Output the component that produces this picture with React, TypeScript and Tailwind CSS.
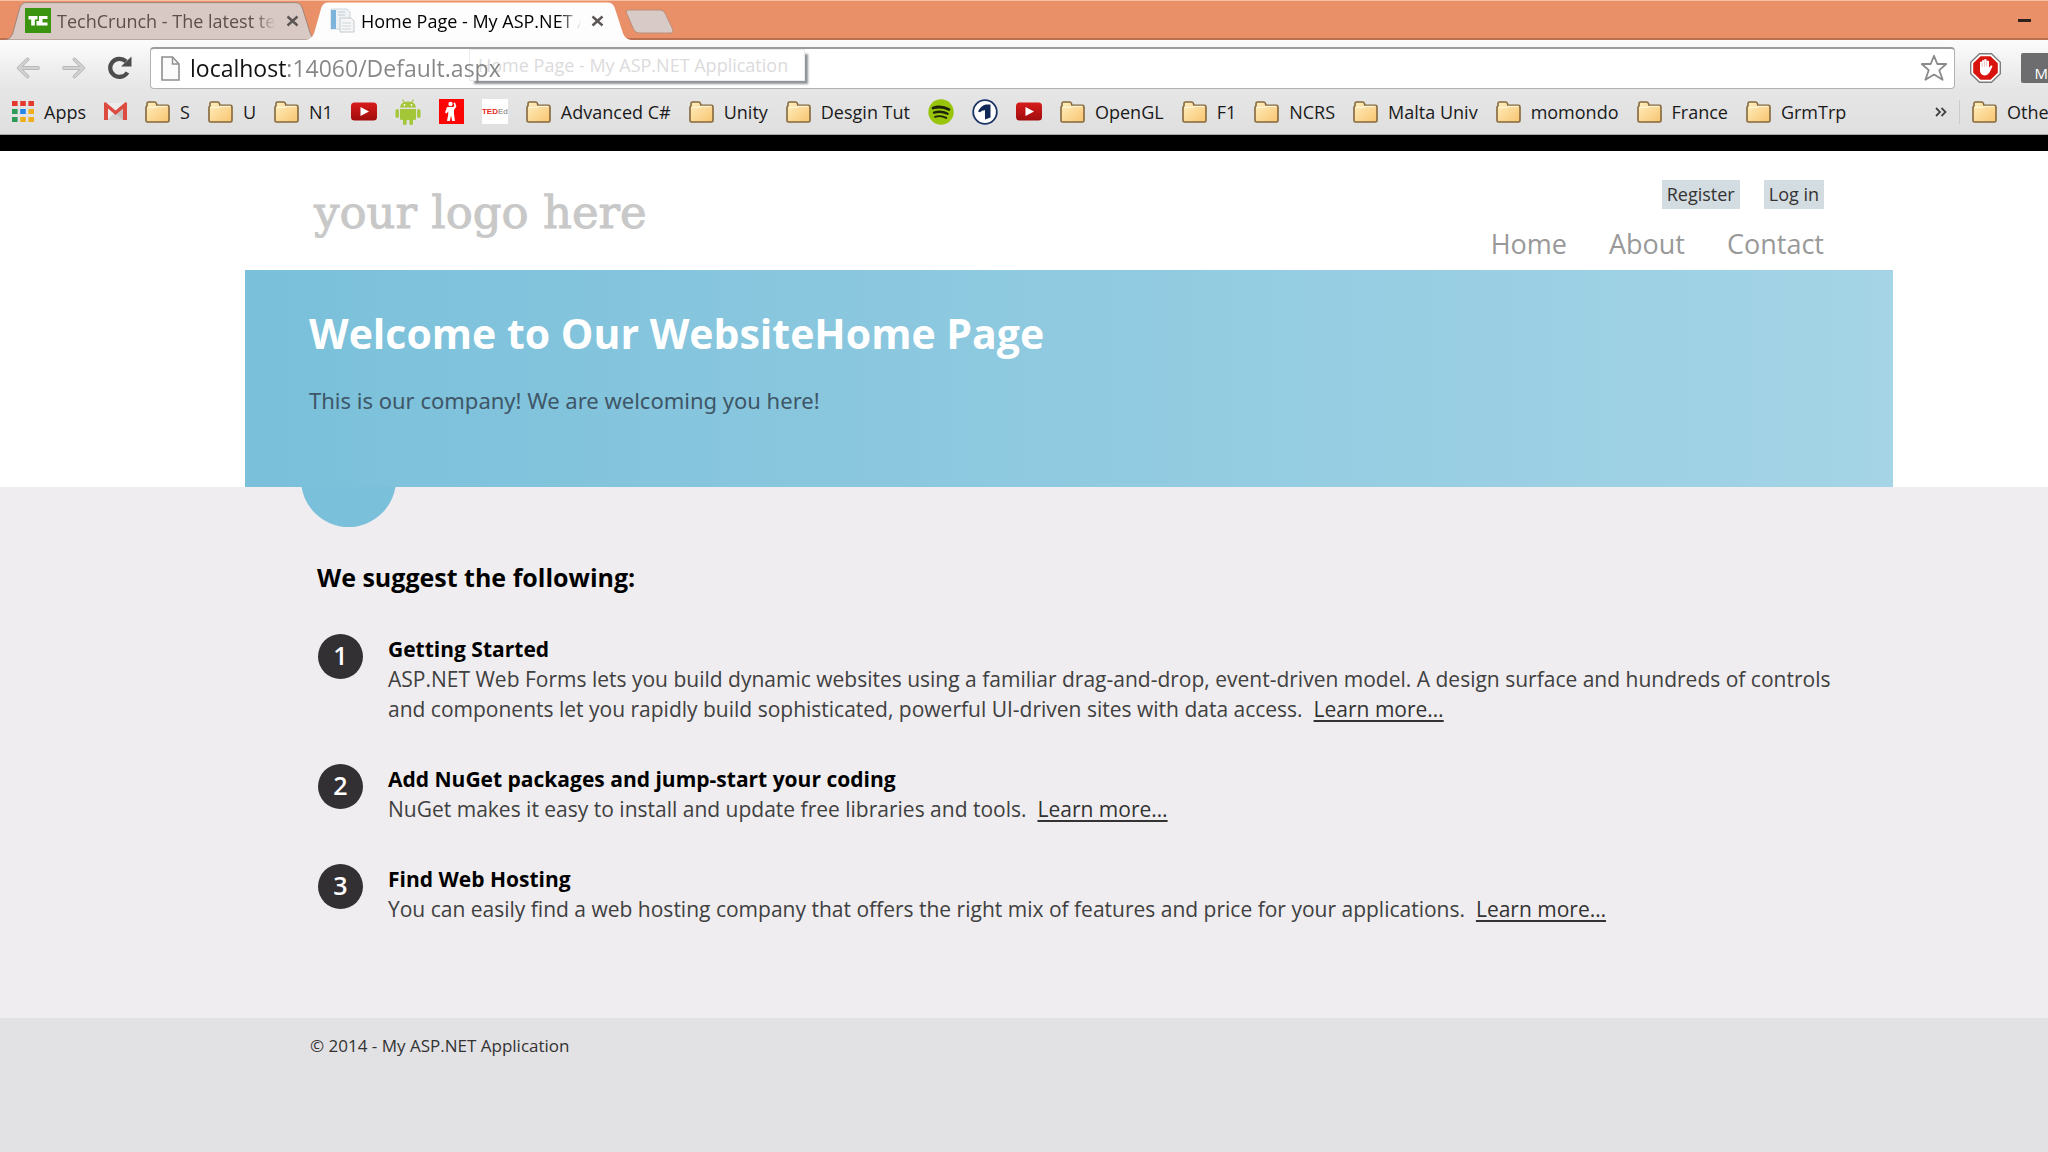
import type { ReactNode } from "react";

/* ---------- icons ---------- */

function FolderIcon() {
  return (
    <svg viewBox="0 0 25 22" className="h-[22px] w-[25px] shrink-0" aria-hidden="true">
      <defs>
        <linearGradient id="folder" x1="0" y1="0" x2="1" y2="1">
          <stop offset="0" stopColor="#fff0c0" />
          <stop offset="1" stopColor="#f8c470" />
        </linearGradient>
      </defs>
      <path d="M2 5V2.6Q2 1 3.6 1H9.4Q11 1 11.4 2.4L12 4.4H22.4Q24 4.4 24 6V19.4Q24 21 22.4 21H2.6Q1 21 1 19.4V6Z" fill="url(#folder)" stroke="#84673a" strokeWidth="1.6" />
      <path d="M2.5 6.4H10.6L12 5.4H22.6" fill="none" stroke="#fff6d8" strokeWidth="1.2" />
    </svg>
  );
}

function AppsIcon() {
  const colors = ["#e5392f", "#e5392f", "#e5392f", "#2e9a57", "#2387ea", "#efae1c", "#2e9a57", "#efae1c", "#efae1c"];
  return (
    <svg viewBox="0 0 22 21" className="h-[21px] w-[22px] shrink-0" aria-hidden="true">
      {colors.map((c, i) => (
        <rect key={i} x={(i % 3) * 8.2} y={Math.floor(i / 3) * 8} width="5.6" height="5" fill={c} />
      ))}
    </svg>
  );
}

function GmailIcon() {
  return (
    <svg viewBox="0 0 23 19" className="h-[19px] w-[23px] shrink-0" aria-hidden="true">
      <path d="M2 1H21V18H2Z" fill="#ececec" />
      <path d="M3 18L11.5 10L20 18Z" fill="#d2d2d2" />
      <path d="M12 11L21 3V18H19Z" fill="#c4c0c0" />
      <path d="M0 1.5Q0 0 2 0.4L11.5 8.6L21 0.4Q23 0 23 1.5V18H19V6.4L11.5 13L4 6.4V18H0Z" fill="#dc4a40" />
    </svg>
  );
}

function YouTubeIcon() {
  return (
    <svg viewBox="0 0 26 19" className="h-[19px] w-[26px] shrink-0" aria-hidden="true">
      <defs>
        <linearGradient id="yt" x1="0" y1="0" x2="0" y2="1">
          <stop offset="0" stopColor="#d81c1c" />
          <stop offset="1" stopColor="#a00c0c" />
        </linearGradient>
      </defs>
      <rect x="0" y="0.5" width="26" height="18" rx="3.5" fill="url(#yt)" />
      <path d="M9.5 5L18 9.5L9.5 14Z" fill="#fff" />
    </svg>
  );
}

function AndroidIcon() {
  return (
    <svg viewBox="0 0 26 26" className="h-[26px] w-[26px] shrink-0" aria-hidden="true">
      <g fill="#a4c639">
        <path d="M5 8.6Q5.600 2.800 13 2.600Q20.400 2.800 21 8.600Z" />
        <path d="M5 10H21V19.500Q21 21 19.500 21H6.500Q5 21 5 19.500Z" />
        <rect x="0.500" y="10" width="3.400" height="9" rx="1.700" />
        <rect x="22.100" y="10" width="3.400" height="9" rx="1.700" />
        <rect x="8" y="18" width="3.600" height="8" rx="1.600" />
        <rect x="14.400" y="18" width="3.600" height="8" rx="1.600" />
      </g>
      <path d="M7.500 0.500L9.500 4M18.500 0.500L16.500 4" stroke="#a4c639" strokeWidth="1.200" />
      <circle cx="9.500" cy="6" r="0.900" fill="#fff" />
      <circle cx="16.500" cy="6" r="0.900" fill="#fff" />
    </svg>
  );
}

function FigureIcon() {
  return (
    <svg viewBox="0 0 25 25" className="h-[25px] w-[25px] shrink-0" aria-hidden="true">
      <rect width="25" height="25" fill="#fb0505" />
      <circle cx="11.500" cy="5" r="2.200" fill="#fff" />
      <path d="M8 8H14L15.500 7L14.500 4L16 3.500L17.400 7.500L15 11V15L16 22H13.200L12 16.500L10.800 22H8L9.200 15.500V12L7.800 14.500L6 13.500Z" fill="#fff" />
    </svg>
  );
}

function TedEdIcon() {
  return (
    <span className="flex h-[25px] w-[26px] shrink-0 items-center justify-center bg-white font-['Liberation_Sans'] text-[8px] leading-none font-bold">
      <span className="text-[#e62b1e]">TED</span>
      <span className="font-normal text-[#777]">Ed</span>
    </span>
  );
}

function SpotifyIcon() {
  return (
    <svg viewBox="0 0 26 26" className="h-[26px] w-[26px] shrink-0" aria-hidden="true">
      <circle cx="13" cy="13" r="12.700" fill="#98c40c" />
      <g fill="none" stroke="#1d2408" strokeLinecap="round">
        <path d="M5 9Q13 6.400 21 10.400" strokeWidth="2.800" />
        <path d="M6 13.600Q13 11.400 19.600 14.800" strokeWidth="2.300" />
        <path d="M7 17.800Q13 16 18.200 18.900" strokeWidth="1.900" />
      </g>
    </svg>
  );
}

function ArdIcon() {
  return (
    <svg viewBox="0 0 26 26" className="h-[26px] w-[26px] shrink-0" aria-hidden="true">
      <circle cx="13" cy="13" r="11.800" fill="#fff" stroke="#1c3566" strokeWidth="1.800" />
      <path d="M6 12.500Q9 6.500 14 5.500H18.500V18.500L13 20.500V11.200Q10 11 8 13.200Z" fill="#0f2858" />
    </svg>
  );
}

function CloseIcon() {
  return (
    <svg viewBox="0 0 13 12" className="h-3 w-[13px]" aria-hidden="true">
      <path d="M1.500 1.500L11.500 10.500M11.500 1.500L1.500 10.500" stroke="#5c5654" strokeWidth="2.400" />
    </svg>
  );
}

function ArrowIcon({ flip = false }: { flip?: boolean }) {
  return (
    <svg viewBox="0 0 24 22" className={flip ? "h-[22px] w-6 -scale-x-100" : "h-[22px] w-6"} aria-hidden="true">
      <path d="M11.500 2.500L2.800 11L11.500 19.500M3.500 11H22" fill="none" stroke="#b9b9b9" strokeWidth="3.800" strokeLinecap="round" strokeLinejoin="round" />
      <path d="M11.500 2.500L2.800 11L11.500 19.500M3.500 11H22" fill="none" stroke="#d2d2d2" strokeWidth="1.800" strokeLinecap="round" strokeLinejoin="round" />
    </svg>
  );
}

function ReloadIcon() {
  return (
    <svg viewBox="0 0 25 24" className="h-6 w-[25px]" aria-hidden="true">
      <path d="M20.500 16.500A9.300 9 0 1 1 19 5.400" fill="none" stroke="#4d4d4d" strokeWidth="4.200" />
      <path d="M24.500 0.500V10.500H14Z" fill="#4d4d4d" />
    </svg>
  );
}

function PageIcon() {
  return (
    <svg viewBox="0 0 19 25" className="h-[25px] w-[19px] shrink-0" aria-hidden="true">
      <path d="M1 1H11.500L18 8V24H1Z" fill="#fbfbfb" stroke="#8f8f8f" strokeWidth="1.600" />
      <path d="M11.500 1V8H18" fill="none" stroke="#8f8f8f" strokeWidth="1.400" />
    </svg>
  );
}

function StarIcon() {
  return (
    <svg viewBox="0 0 28 28" className="h-7 w-7" aria-hidden="true">
      <path d="M14 1.800L17.300 10H26.200L19.300 16.200L22.600 25.800L14 20.600L5.400 25.800L8.700 16.200L1.800 10H10.700Z" fill="#fff" stroke="#8a8a8a" strokeWidth="1.800" strokeLinejoin="round" />
    </svg>
  );
}

function AdBlockIcon() {
  return (
    <svg viewBox="0 0 31 30" className="h-[30px] w-[31px]" aria-hidden="true">
      <path d="M9.500 0.700H21.500L30.300 9.300V20.700L21.500 29.300H9.500L0.700 20.700V9.300Z" fill="#fff" stroke="#7d7d7d" strokeWidth="1.400" />
      <path d="M10.500 3.200H20.500L27.800 10.200V19.800L20.500 26.800H10.500L3.200 19.800V10.200Z" fill="#d8140f" />
      <path d="M10 13.500V9Q11 8 12 9V7.500Q13 6.300 14.200 7.500V6.600Q15.400 5.400 16.600 6.600V8Q17.800 7 19 8.200V14.500L21 12.500Q22.600 12.300 22.400 13.500L19.500 19.500Q17.500 22.500 14.500 22.500Q10.600 22 10 18Z" fill="#fff" />
      <path d="M12.200 9.500V14M14.500 8.500V13.500M16.700 8.500V13.500" stroke="#e9a9a5" strokeWidth="0.700" />
    </svg>
  );
}

function TechCrunchIcon() {
  return (
    <svg viewBox="0 0 26 25" className="h-[25px] w-[26px] shrink-0" aria-hidden="true">
      <rect width="26" height="25" fill="#3b9410" />
      <path d="M3.500 8H12.500V11.500H9.800V17.500H6.200V11.500H3.500Z" fill="#fff" />
      <path d="M14 8H22.500V11H17.500V14.500H22.500V17.500H11.500V13H14Z" fill="#fff" />
    </svg>
  );
}

function SiteIcon() {
  return (
    <svg viewBox="0 0 25 25" className="h-[25px] w-[25px] shrink-0" aria-hidden="true">
      <path d="M1 1H17L20 4V21H1Z" fill="#eef2f4" stroke="#cdd5da" />
      <rect x="1" y="2" width="5" height="19" fill="#7db4dc" />
      <path d="M8 4H15M8 7H15" stroke="#c2ccd2" strokeWidth="1.200" />
      <path d="M10 10H21L24 13V24H10Z" fill="#f6f6f6" stroke="#c4cace" />
      <path d="M12 15H21M12 18H21M12 21H21" stroke="#cfd5d9" strokeWidth="1.200" />
    </svg>
  );
}

/* ---------- browser frame ---------- */

function Tab({ active = false, icon, title }: { active?: boolean; icon: ReactNode; title: string }) {
  return (
    <div className={active ? "relative z-10 -ml-3 flex h-[38px] w-[325px] items-center pr-[27px] pb-px pl-[24px]" : "relative flex h-[38px] w-[313px] items-center pr-[19px] pb-px pl-[20px]"}>
      <svg viewBox="0 0 320 38" preserveAspectRatio="none" className="absolute inset-0 h-full w-full" aria-hidden="true">
        <path d="M0 38Q6 37 8 31L15 6Q17 0.600 22 0.600H297Q302 0.600 304 6L312 31Q314 37 320 38Z" fill={active ? "#fdfdfd" : "#d8c9c4"} stroke={active ? "none" : "#a08478"} />
      </svg>
      <span className="relative flex min-w-0 flex-1 items-center gap-[6px]">
        {icon}
        <span className={active ? "min-w-0 flex-1 overflow-hidden mask-r-from-90% text-lg leading-6 whitespace-nowrap text-black" : "min-w-0 flex-1 overflow-hidden mask-r-from-90% text-lg leading-6 whitespace-nowrap text-[#5d4f4b]"}>
          {title}
        </span>
        <button type="button" aria-label={"Close " + title} className="ml-1 shrink-0">
          <CloseIcon />
        </button>
      </span>
    </div>
  );
}

function TabStrip() {
  return (
    <div className="flex h-10 items-end border-t border-[#f6c0a2] bg-[#ea9068] pl-[5px] shadow-[inset_0_-2px_0_#b97150]">
      <Tab icon={<TechCrunchIcon />} title="TechCrunch - The latest technology news" />
      <Tab active icon={<SiteIcon />} title="Home Page - My ASP.NET Application" />
      <button type="button" aria-label="New tab" className="mb-[6px] -ml-[6px]">
        <svg viewBox="0 0 50 25" className="h-[25px] w-[50px]" aria-hidden="true">
          <path d="M3 1H35Q39 1 40.500 5L47.500 20Q49 24 45 24H14Q10 24 8.500 20L1.500 4Q0.500 1 3 1Z" fill="#d8cbc7" stroke="#bb8f7c" />
        </svg>
      </button>
      <button type="button" aria-label="Minimize" className="mr-[17px] mb-[18px] ml-auto h-[3px] w-[13px] bg-[#2e221e]" />
    </div>
  );
}

function Toolbar() {
  return (
    <div className="flex h-[49px] items-center overflow-hidden pt-[6px] pl-4">
      <button type="button" aria-label="Back">
        <ArrowIcon />
      </button>
      <button type="button" aria-label="Forward" className="ml-[22px]">
        <ArrowIcon flip />
      </button>
      <button type="button" aria-label="Reload" className="ml-[21px]">
        <ReloadIcon />
      </button>
      <div className="relative ml-[18px] flex h-[42px] min-w-0 flex-1 items-center rounded-[4px] border border-t-2 border-[#b2b2b2] border-t-[#9c9c9c] bg-white pr-[6px] pl-[10px]">
        <PageIcon />
        <div className="pointer-events-none absolute top-0 left-[318px] border border-[#ececec] bg-white pr-4 pl-2 text-lg leading-[30px] whitespace-nowrap text-[#dcdadc] shadow-[4px_4px_2px_-1px_#8f9296]">
          Home Page - My ASP.NET Application
        </div>
        <input
          type="text"
          aria-label="Address"
          defaultValue="localhost:14060/Default.aspx"
          className="relative ml-[10px] min-w-0 flex-1 bg-[linear-gradient(to_right,#111_97px,#858585_97px)] bg-clip-text text-[23px] leading-8 text-transparent outline-none"
        />
        <button type="button" aria-label="Bookmark this page">
          <StarIcon />
        </button>
      </div>
      <button type="button" aria-label="AdBlock" className="ml-[15px] shrink-0">
        <AdBlockIcon />
      </button>
      <button type="button" aria-label="Mail" className="ml-5 flex h-[30px] w-[27px] shrink-0 items-end justify-end overflow-hidden rounded-l-[2px] bg-[#6d6d6f] pb-[2px] text-[15px] leading-4 text-white">
        M
      </button>
    </div>
  );
}

function Bookmark({ icon, label, name }: { icon: ReactNode; label?: string; name?: string }) {
  return (
    <button type="button" aria-label={label ? undefined : name} className="flex shrink-0 items-center gap-[10px] text-lg leading-6 text-[#1a1a1a]">
      {icon}
      {label && <span>{label}</span>}
    </button>
  );
}

function BookmarksBar() {
  return (
    <div className="flex h-[46px] items-center overflow-hidden border-b border-[#a9a9a9] pl-3">
      <div className="flex min-w-0 flex-1 items-center gap-[18px]">
        <Bookmark icon={<AppsIcon />} label="Apps" />
        <Bookmark icon={<GmailIcon />} name="Gmail" />
        <Bookmark icon={<FolderIcon />} label="S" />
        <Bookmark icon={<FolderIcon />} label="U" />
        <Bookmark icon={<FolderIcon />} label="N1" />
        <Bookmark icon={<YouTubeIcon />} name="YouTube" />
        <Bookmark icon={<AndroidIcon />} name="Android" />
        <Bookmark icon={<FigureIcon />} name="Exercises" />
        <Bookmark icon={<TedEdIcon />} name="TED-Ed" />
        <Bookmark icon={<FolderIcon />} label="Advanced C#" />
        <Bookmark icon={<FolderIcon />} label="Unity" />
        <Bookmark icon={<FolderIcon />} label="Desgin Tut" />
        <Bookmark icon={<SpotifyIcon />} name="Spotify" />
        <Bookmark icon={<ArdIcon />} name="Das Erste" />
        <Bookmark icon={<YouTubeIcon />} name="YouTube subscriptions" />
        <Bookmark icon={<FolderIcon />} label="OpenGL" />
        <Bookmark icon={<FolderIcon />} label="F1" />
        <Bookmark icon={<FolderIcon />} label="NCRS" />
        <Bookmark icon={<FolderIcon />} label="Malta Univ" />
        <Bookmark icon={<FolderIcon />} label="momondo" />
        <Bookmark icon={<FolderIcon />} label="France" />
        <Bookmark icon={<FolderIcon />} label="GrmTrp" />
      </div>
      <button type="button" aria-label="More bookmarks" className="shrink-0">
        <svg viewBox="0 0 12 10" className="h-[10px] w-3" aria-hidden="true">
          <path d="M1 1L5 5L1 9M6.500 1L10.500 5L6.500 9" fill="none" stroke="#444" strokeWidth="1.800" />
        </svg>
      </button>
      <div className="ml-3 flex w-[89px] shrink-0 overflow-hidden border-l border-[#cbcbcb] pl-3">
        <Bookmark icon={<FolderIcon />} label="Other bookmarks" />
      </div>
    </div>
  );
}

/* ---------- web page ---------- */

function SiteHeader() {
  return (
    <header className="flex h-[119px] justify-between pr-[69px] pl-[69px]">
      <a href="#" className="pt-[34px] font-['DejaVu_Serif',serif] text-[45px] leading-[56px] text-[#c8c8c8] [-webkit-text-stroke:1px_#c8c8c8]">
        your logo here
      </a>
      <div className="flex flex-col items-end gap-[17px] pt-[29px]">
        <div className="flex gap-6 text-lg leading-[29px] text-[#333]">
          <a href="#register" className="bg-[#d3dce0] px-[5px]">Register</a>
          <a href="#login" className="bg-[#d3dce0] px-[5px]">Log in</a>
        </div>
        <nav className="flex gap-[42px] text-[27px] leading-9 text-[#999]">
          <a href="#home">Home</a>
          <a href="#about">About</a>
          <a href="#contact">Contact</a>
        </nav>
      </div>
    </header>
  );
}

function Banner() {
  return (
    <section className="relative h-[217px] bg-linear-to-r from-[#7ac0da] to-[#a4d4e6] pt-[39px] pl-16">
      <div className="absolute top-full left-14 h-10 w-[95px] overflow-hidden" aria-hidden="true">
        <div className="-mt-[55px] size-[95px] rounded-full bg-[#7bc0da]" />
      </div>
      <h1 className="text-[41px] leading-[48px] font-bold text-white">Welcome to Our WebsiteHome Page</h1>
      <p className="mt-7 font-['Noto_Sans'] text-[22px] leading-[30px] text-[#3e5667]">This is our company! We are welcoming you here!</p>
    </section>
  );
}

const steps = [
  {
    title: "Getting Started",
    text: "ASP.NET Web Forms lets you build dynamic websites using a familiar drag-and-drop, event-driven model. A design surface and hundreds of controls and components let you rapidly build sophisticated, powerful UI-driven sites with data access.",
  },
  {
    title: "Add NuGet packages and jump-start your coding",
    text: "NuGet makes it easy to install and update free libraries and tools.",
  },
  {
    title: "Find Web Hosting",
    text: "You can easily find a web hosting company that offers the right mix of features and price for your applications.",
  },
];

function Suggestions() {
  return (
    <main className="bg-[#efedef] pt-[75px] pr-[208px] pb-[85px] pl-[317px]">
      <h2 className="text-[25px] leading-[30px] font-bold text-black">We suggest the following:</h2>
      <ol className="mt-[42px] flex flex-col gap-10 pb-[9px]">
        {steps.map((step, i) => (
          <li key={step.title} className="flex items-start gap-[25px]">
            <span className="ml-px flex size-[45px] shrink-0 items-center justify-center rounded-full bg-[#333034] pb-[2px] text-[25px] leading-none font-semibold text-white">
              {i + 1}
            </span>
            <div className="text-[21px] leading-[30px] text-[#404040]">
              <h3 className="font-bold text-black">{step.title}</h3>
              <p>
                {step.text}&nbsp;{" "}
                <a href="#more" className="text-[#333] underline underline-offset-3">Learn more…</a>
              </p>
            </div>
          </li>
        ))}
      </ol>
    </main>
  );
}

export default function App() {
  return (
    <div className="flex min-h-screen flex-col overflow-hidden bg-white font-['Open_Sans','Noto_Sans',sans-serif]">
      <TabStrip />
      <div className="bg-linear-to-b from-[#fcfcfc] via-[#e6e6e6] to-[#dfdfe0]">
        <Toolbar />
        <BookmarksBar />
      </div>
      <div className="h-4 bg-black" />
      <div className="mr-[155px] ml-[245px]">
        <SiteHeader />
        <Banner />
      </div>
      <Suggestions />
      <footer className="flex-1 bg-[#e2e1e3] pt-4 pl-[310px] text-[17px] leading-6 text-[#333]">
        © 2014 - My ASP.NET Application
      </footer>
    </div>
  );
}
